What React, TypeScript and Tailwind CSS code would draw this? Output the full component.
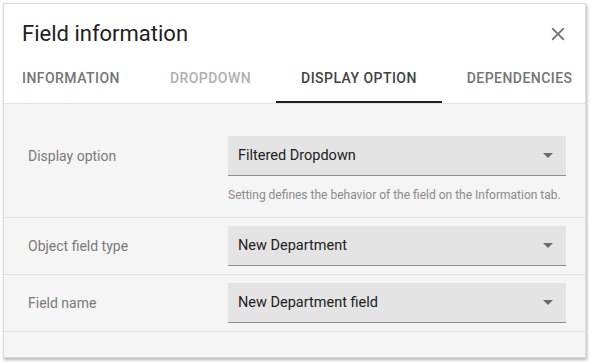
import { ReactNode } from 'react';

const tabs = [
  { label: 'INFORMATION', tone: 'text-[#757575]' },
  { label: 'DROPDOWN', tone: 'text-[#b0b0b0]' },
  { label: 'DISPLAY OPTION', tone: 'text-[#424242]', active: true },
  { label: 'DEPENDENCIES', tone: 'text-[#757575]' },
];

function CloseIcon() {
  return (
    <svg width="22" height="22" viewBox="0 0 24 24" className="fill-[#757575]">
      <path d="M19 6.41L17.59 5 12 10.59 6.41 5 5 6.41 10.59 12 5 17.59 6.41 19 12 13.41 17.59 19 19 17.59 13.41 12z" />
    </svg>
  );
}

function Select({ value }: { value: string }) {
  return (
    <div className="h-[40px] w-[338px] bg-[#e4e4e4] border-b border-[#8d8d8d] flex items-center justify-between pl-[10px] pr-[13px]">
      <span className="text-[14.5px] text-[#212121]">{value}</span>
      <svg width="10" height="5" viewBox="0 0 10 5" className="fill-[#6b6b6b]">
        <path d="M0 0l5 5 5-5z" />
      </svg>
    </div>
  );
}

function Row({ label, value, children, first }: { label: string; value: string; children?: ReactNode; first?: boolean }) {
  return (
    <div className={`flex border-b border-[#e2e2e2] pl-[24px] ${first ? 'pt-[8px] pb-[14px]' : 'py-[8px]'}`}>
      <div className="w-[200px] h-[40px] flex items-center text-[14px] text-[#7a7a7a]">{label}</div>
      <div className="flex flex-col">
        <Select value={value} />
        {children}
      </div>
    </div>
  );
}

export default function App() {
  return (
    <div className="w-[591px] h-[363px] bg-white pt-[3px] pl-[3px] font-['Roboto','Liberation_Sans',sans-serif]">
      <div className="w-[583px] h-[355px] bg-[#f5f5f5] border border-[#dcdcdc] shadow-[1px_2px_3px_rgba(0,0,0,0.3)] overflow-hidden flex flex-col">
        <div className="bg-white border-b border-[#e2e2e2]">
          <div className="h-[51px] flex items-start justify-between pt-[16px] pl-[18px] pr-[16px]">
            <h1 className="text-[22px] leading-[28px] text-[#212121]">Field information</h1>
            <div className="pt-[3px]">
              <CloseIcon />
            </div>
          </div>
          <div className="flex h-[48px] -ml-[7px]">
            {tabs.map((t) => (
              <div
                key={t.label}
                className={`px-[25px] h-[48px] flex items-center shrink-0 text-[14px] font-medium tracking-[0.45px] border-b-2 ${t.tone} ${t.active ? 'border-[#212121]' : 'border-transparent'}`}
              >
                {t.label}
              </div>
            ))}
          </div>
        </div>
        <div className="pt-[24px]">
          <Row label="Display option" value="Filtered Dropdown" first>
            <p className="mt-[11px] text-[12px] leading-[16px] text-[#8a8a8a]">
              Setting defines the behavior of the field on the Information tab.
            </p>
          </Row>
          <Row label="Object field type" value="New Department" />
          <Row label="Field name" value="New Department field" />
        </div>
      </div>
    </div>
  );
}
